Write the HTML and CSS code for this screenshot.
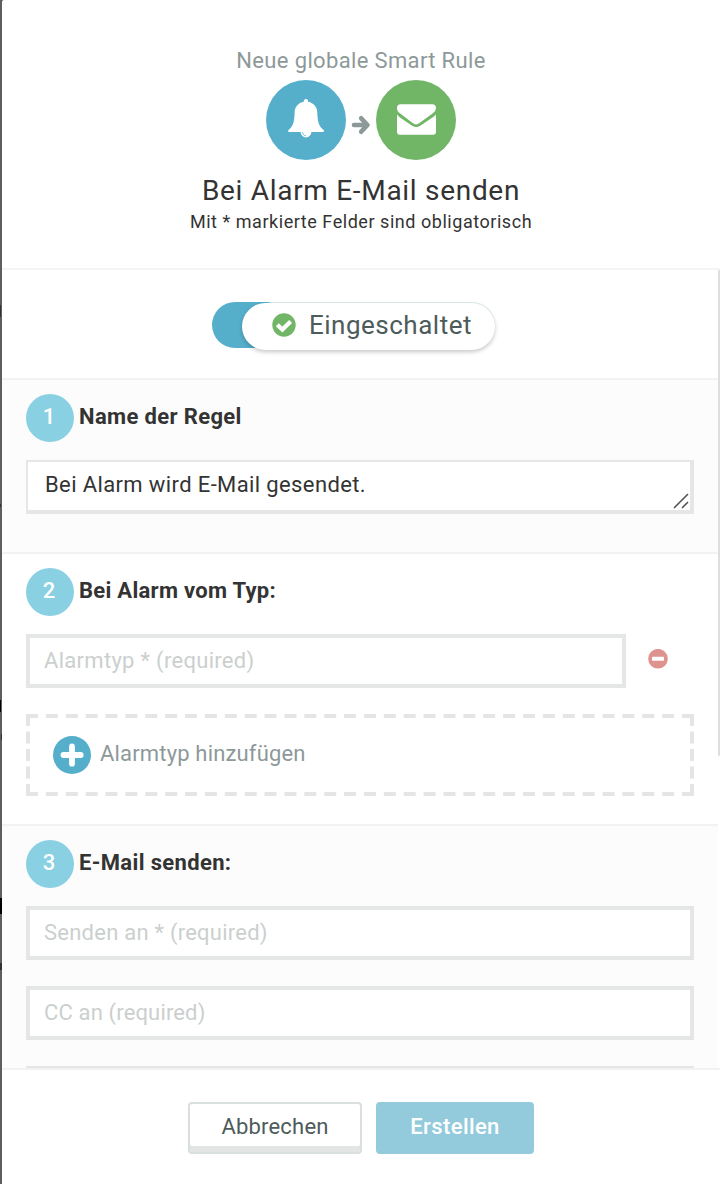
FILE: index.html
```html
<!DOCTYPE html>
<html lang="de">
<head>
<meta charset="utf-8">
<title>Neue globale Smart Rule</title>
<link rel="stylesheet" href="styles.css">
</head>
<body>
<div class="backdrop">
<main class="dialog">
  <header class="head">
    <p class="kicker"><span class="t-kicker">Neue globale Smart Rule</span></p>
    <div class="flow">
      <svg class="disc" viewBox="0 0 80 80"><circle cx="40" cy="40" r="40" fill="#55afcb"/><path fill="#fff" d="M40 19c1.300 0 2.100.9 2.100 2.200v.6c5.700 1.100 9 5.300 9.200 10.600.3 9.600 1.500 13.600 6.300 17.600 1 .9.400 2-.8 2H45.400a5.400 5.400 0 0 1-10.800 0H23.400c-1.300 0-1.900-1.100-.8-2 4.600-4.100 5.700-8 6-17.600.2-5.400 3.500-9.500 9.200-10.600v-.6c0-1.300.9-2.200 2.200-2.200z"/><path d="M36.500 52.300c.2 2 1.500 3.300 3.500 3.500" fill="none" stroke="#55afcb" stroke-width=".8"/></svg>
      <svg class="arrow" viewBox="0 0 20 20"><path d="M3 10h13M10.200 3.300 16.500 10l-6.300 6.700" fill="none" stroke="#8d9999" stroke-width="4.600" stroke-linecap="round" stroke-linejoin="round"/></svg>
      <svg class="disc" viewBox="0 0 80 80"><circle cx="40" cy="40" r="40" fill="#71b567"/><path fill="#fff" d="M24.500 24.200h31.800c2.300 0 3.700 1.300 3.700 3.400 0 3-1.600 4.600-3.800 6.200L43.500 43c-2.600 1.900-4.300 1.900-6.900 0L24.300 33.600c-2-1.500-3.300-3-3.300-5.800 0-2.200 1.300-3.600 3.500-3.600zM21 34.600c.8 1 1.800 1.900 3 2.800l11.400 7.900c3.600 2.400 6 2.400 9.600 0l12.200-8.400c1.100-.7 2-1.300 2.800-2.300v17.200c0 1.900-.9 2.900-2.800 2.900H23.800c-1.900 0-2.800-1-2.800-2.900z"/></svg>
    </div>
    <h1 class="title"><span class="t-title">Bei Alarm E-Mail senden</span></h1>
    <p class="note"><span class="t-note">Mit * markierte Felder sind obligatorisch</span></p>
  </header>

  <div class="body">
    <section class="switch-row">
      <div class="switch"><div class="knob">
        <svg class="check" viewBox="0 0 24 24"><circle cx="12" cy="12" r="11.700" fill="#71b567"/><path d="M5.300 11.800 10.400 16.600 18.600 8.600" fill="none" stroke="#fff" stroke-width="4.200"/></svg>
        <span class="t-switch">Eingeschaltet</span>
      </div></div>
    </section>

    <section class="step step-name">
      <h2 class="step-head"><span class="num">1</span><span class="t-name">Name der Regel</span></h2>
      <div class="field area"><span class="t-area">Bei Alarm wird E-Mail gesendet.</span>
        <svg class="grip" viewBox="0 0 16 16"><path d="M1 15 15 1M9 15l6-6" stroke="#555" stroke-width="1.600"/></svg>
      </div>
    </section>

    <section class="step step-type">
      <h2 class="step-head"><span class="num">2</span><span class="t-type">Bei Alarm vom Typ:</span></h2>
      <div class="type-row">
        <div class="field hint"><span class="t-alarm">Alarmtyp * (required)</span></div>
        <svg class="remove" viewBox="0 0 20 20"><circle cx="10" cy="9.700" r="9.800" fill="#de938e"/><rect x="4" y="7.800" width="12" height="4" rx=".7" fill="#fff"/></svg>
      </div>
      <div class="add">
        <svg class="dashes" viewBox="0 0 668 82"><path d="M0 2H668M0 80H668" stroke-dasharray="12 7.880"/><path d="M2 0V82M666 0V82" stroke-dasharray="12 5.500"/></svg>
        <svg class="plus" viewBox="0 0 38 38"><circle cx="19" cy="19" r="19" fill="#55afcb"/><path d="M10.500 19h17.200M19 10.500v17.200" stroke="#fff" stroke-width="5.800" stroke-linecap="round"/></svg>
        <span class="t-add">Alarmtyp hinzufügen</span>
      </div>
    </section>

    <section class="step step-mail">
      <h2 class="step-head"><span class="num">3</span><span class="t-mail">E-Mail senden:</span></h2>
      <div class="field hint"><span class="t-to">Senden an * (required)</span></div>
      <div class="field hint"><span class="t-cc">CC an (required)</span></div>
      <div class="field hint"></div>
    </section>
    <i class="scrollbar"></i>
  </div>

  <footer class="foot">
    <button class="btn cancel"><span class="t-cancel">Abbrechen</span></button>
    <button class="btn create"><span class="t-create">Erstellen</span></button>
  </footer>
</main>
</div>
</body>
</html>
```
FILE: styles.css
```css
* { box-sizing: border-box; }
body { margin: 0; font-family: Roboto, "Liberation Sans", sans-serif; color: #333; font-size: 22px; }
h1, h2, p { margin: 0; font-weight: 400; }
svg { display: block; flex: none; }
span { white-space: nowrap; }
.backdrop {
  width: 720px; height: 1184px; padding-left: 2px; overflow: hidden;
  background:
    linear-gradient(#333, #333) 0 305px / 1px 12px no-repeat,
    linear-gradient(#333, #333) 0 504px / 1px 3px no-repeat,
    linear-gradient(#000, #000) 0 700px / 1px 12px no-repeat,
    linear-gradient(#333, #333) 1px 734px / 1px 6px no-repeat,
    linear-gradient(#000, #000) 0 898px / 2px 16px no-repeat,
    linear-gradient(#333, #333) 0 963px / 2px 7px no-repeat,
    #5e5e5e;
}
.dialog { height: 1184px; background: #fff; border-top-left-radius: 2px; display: flex; flex-direction: column; }

.head { height: 270px; padding-top: 47px; border-bottom: 2px solid #f4f4f4; display: flex; flex-direction: column; align-items: center; flex: none; }
.kicker { height: 33px; line-height: 28px; color: #8d9999; }
.flow { display: flex; align-items: center; }
.disc { width: 80px; height: 80px; }
.arrow { width: 20px; height: 20px; margin: 9px 5px 0; }
.title { margin-top: 14px; font-size: 28px; line-height: 34px; }
.note { margin-top: 2px; font-size: 18px; line-height: 24px; }

.body { position: relative; height: 798px; overflow: hidden; flex: none; }
.scrollbar { position: absolute; right: 0; top: 0; width: 2px; height: 486px; background: #dbdfde; border-radius: 1px; }
.switch-row { height: 108px; padding-top: 32px; }
.switch { width: 283px; height: 46px; margin-left: 210px; padding: 1px 0 0 30px; border-radius: 24px; background: linear-gradient(90deg, #55afcb 55px, #e0eef0 60px); }
.knob { height: 47px; padding-left: 30px; border-radius: 24px; background: #fff; box-shadow: 0 2px 4px rgba(0,0,0,.22); display: flex; align-items: center; gap: 13px; font-size: 26px; color: #4d5b5b; }
.knob span { line-height: 44px; height: 47px; }
.check { width: 24px; height: 24px; margin-top: -3px; }

.step { width: 716px; padding: 14px 24px 0; border-top: 2px solid #f2f2f2; }
.step-name { height: 174px; background: #fcfcfc; }
.step-type { height: 272px; }
.step-mail { height: 260px; background: #fcfcfc; }
.step-head { display: flex; gap: 5px; height: 66px; line-height: 46px; font-size: 22px; font-weight: 700; }
.num { width: 48px; height: 48px; border-radius: 50%; background: #8ad0e3; color: #fff; text-align: center; padding-right: 2px; line-height: 45px; font-weight: 500; }
.field { height: 54px; padding-left: 14px; border: 4px solid #e5e7e7; background: #fff; line-height: 45px; }
.area { position: relative; border-width: 2px 4px 4px 2px; padding-left: 17px; }
.grip { position: absolute; right: 1px; bottom: 1px; width: 16px; height: 16px; }
.hint { color: #cbcfce; }
.type-row { display: flex; gap: 22px; }
.type-row .field { width: 600px; }
.remove { width: 20px; height: 20px; margin-top: 15px; }
.add { position: relative; height: 82px; margin-top: 26px; padding: 0 0 1px 27px; display: flex; align-items: center; gap: 9px; color: #8d9999; }
.add span { padding-bottom: 3px; }
.dashes { position: absolute; inset: 0; width: 668px; height: 82px; fill: none; stroke: #e5e5e5; stroke-width: 4; }
.plus { width: 38px; height: 38px; }
.step-mail .field + .field { margin-top: 26px; }

.foot { height: 116px; padding-top: 32px; padding-left: 186px; border-top: 2px solid #f2f2f2; display: flex; gap: 14px; flex: none; }
.btn { height: 52px; padding: 0; border: 2px solid #d9dfde; border-radius: 4px; font: 22px/46px Roboto, sans-serif; display: flex; justify-content: center; align-items: flex-start; }
.cancel { width: 174px; background: #fff; color: #4d5b5b; box-shadow: inset 0 -6px #e3e4e4; }
.create { width: 158px; border-color: #93cbdd; background: #93cbdd; color: #fff; font-weight: 500; }

.t-kicker { letter-spacing: .35px; }
.t-title { letter-spacing: .7px; }
.t-note { letter-spacing: .54px; }
.t-switch { letter-spacing: .5px; }
.t-name { letter-spacing: .36px; }
.t-area { letter-spacing: .38px; }
.t-type { letter-spacing: .28px; }
.t-alarm { letter-spacing: .3px; }
.t-add { letter-spacing: .17px; }
.t-mail { letter-spacing: .35px; }
.t-to { letter-spacing: .24px; }
.t-cc { letter-spacing: .15px; }
.t-cancel { letter-spacing: .2px; }
.t-create { letter-spacing: .4px; }
```
